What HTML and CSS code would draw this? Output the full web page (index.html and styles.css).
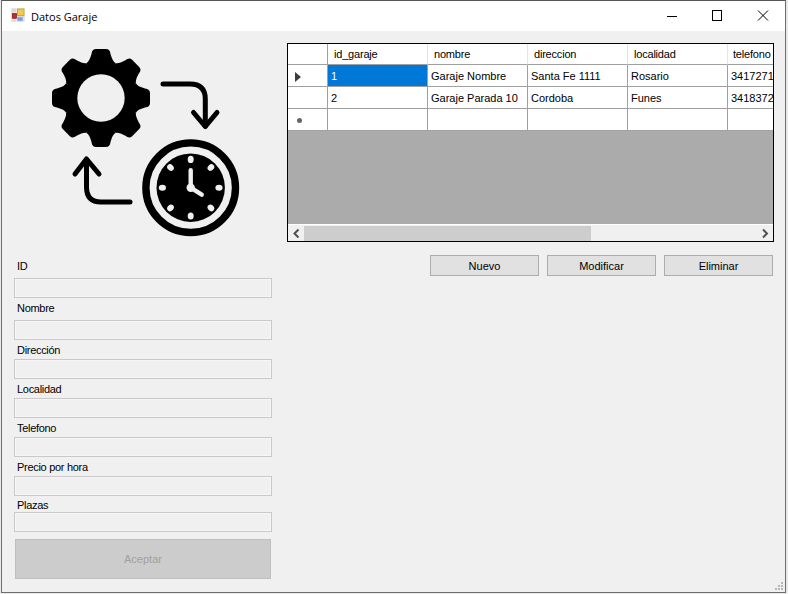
FILE: index.html
```html
<!DOCTYPE html>
<html lang="es">
<head>
<meta charset="utf-8">
<title>Datos Garaje</title>
<link rel="stylesheet" href="styles.css">
</head>
<body>
<div class="window">
  <header class="titlebar">
    <svg class="appicon" viewBox="0 0 16 16" aria-hidden="true">
      <rect x="1.300" y="0.300" width="13.400" height="13.400" fill="#d9d9d9"/>
      <path d="M6.900 0.300V13.700M1.300 4.800H14.700M1.300 11H14.700" stroke="#f7f7f7" stroke-width="0.800"/>
      <rect x="7.500" y="1" width="6.500" height="6.500" fill="#f5cc45" stroke="#c09526" stroke-width="0.700"/>
      <rect x="2.300" y="5.500" width="4.200" height="4.800" fill="#c8281f" stroke="#8a1c16" stroke-width="0.700"/>
      <rect x="7.300" y="9.300" width="5.400" height="3.400" fill="#6f9fe2"/>
    </svg>
    <span class="title">Datos Garaje</span>
    <div class="controls">
      <svg class="ctl" viewBox="0 0 46 30" aria-hidden="true"><path d="M20 15.500H30" stroke="#000" fill="none"/></svg>
      <svg class="ctl" viewBox="0 0 46 30" aria-hidden="true"><rect x="19.500" y="9.500" width="9" height="10" stroke="#000" fill="none"/></svg>
      <svg class="ctl" viewBox="0 0 46 30" aria-hidden="true"><path d="M19 9.500L29 19.500M29 9.500L19 19.500" stroke="#000" fill="none"/></svg>
    </div>
  </header>
  <main class="client">
    <section class="left">
      <svg class="logo" viewBox="50 46 192 194" aria-hidden="true">
        <defs>
          <path id="tooth" d="M-14.500 -35.100Q-11.700 -36.200 -9.500 -44Q-9 -49 -5 -49H5Q9 -49 9.500 -44Q11.700 -36.200 14.500 -35.100L0 0Z"/>
        </defs>
        <g transform="translate(101 98)">
          <use href="#tooth"/>
          <use href="#tooth" transform="rotate(45)"/>
          <use href="#tooth" transform="rotate(90)"/>
          <use href="#tooth" transform="rotate(135)"/>
          <use href="#tooth" transform="rotate(180)"/>
          <use href="#tooth" transform="rotate(225)"/>
          <use href="#tooth" transform="rotate(270)"/>
          <use href="#tooth" transform="rotate(315)"/>
          <circle r="36" fill="#000"/>
          <circle r="23.700" fill="#f0f0f0"/>
        </g>
        <g fill="none" stroke="#000" stroke-width="5" stroke-linecap="round" stroke-linejoin="round">
          <path d="M163 84H190Q205.300 84 205.300 99V126"/>
          <path d="M193.500 112.500L205.300 126.500L217 112.500"/>
          <path d="M130 202H101Q86.500 202 86.500 187V160"/>
          <path d="M75 174L86.500 159L99 174"/>
        </g>
        <g transform="translate(190.700 187.700)">
          <circle r="44.800" fill="none" stroke="#000" stroke-width="7.400"/>
          <circle r="34.200" fill="#000"/>
          <g fill="#f0f0f0">
            <ellipse cy="-28.300" rx="3" ry="3.600"/>
            <ellipse cy="28.300" rx="3" ry="3.600"/>
            <ellipse cx="28.300" rx="3.600" ry="3"/>
            <ellipse cx="-28.300" rx="3.600" ry="3"/>
            <ellipse cx="20.200" cy="-20.200" rx="3" ry="3.600" transform="rotate(45 20.200 -20.200)"/>
            <ellipse cx="-20.200" cy="-20.200" rx="3" ry="3.600" transform="rotate(-45 -20.200 -20.200)"/>
            <ellipse cx="20.200" cy="20.200" rx="3" ry="3.600" transform="rotate(-45 20.200 20.200)"/>
            <ellipse cx="-20.200" cy="20.200" rx="3" ry="3.600" transform="rotate(45 -20.200 20.200)"/>
            <circle r="4.200"/>
          </g>
          <path d="M0 -17.500V0L11 7" fill="none" stroke="#f0f0f0" stroke-width="4.400" stroke-linecap="round" stroke-linejoin="round"/>
        </g>
      </svg>
      <form class="form">
        <label class="field gap-a"><span class="lbl">ID</span><span class="input"></span></label>
        <label class="field gap-a"><span class="lbl">Nombre</span><span class="input"></span></label>
        <label class="field gap-b"><span class="lbl">Dirección</span><span class="input"></span></label>
        <label class="field gap-b"><span class="lbl">Localidad</span><span class="input"></span></label>
        <label class="field gap-b"><span class="lbl">Telefono</span><span class="input"></span></label>
        <label class="field gap-b"><span class="lbl">Precio por hora</span><span class="input"></span></label>
        <label class="field gap-c"><span class="lbl">Plazas</span><span class="input"></span></label>
        <div class="accept">Aceptar</div>
      </form>
    </section>
    <section class="right">
      <div class="grid">
        <div class="viewport">
          <div class="row head">
            <div class="rh"></div>
            <div class="cell">id_garaje</div>
            <div class="cell">nombre</div>
            <div class="cell">direccion</div>
            <div class="cell">localidad</div>
            <div class="cell">telefono</div>
          </div>
          <div class="row">
            <div class="rh"><svg class="marker" viewBox="0 0 6 10" aria-hidden="true"><path d="M0 0L6 5L0 10Z" fill="#3c3c3c"/></svg></div>
            <div class="cell selected">1</div>
            <div class="cell">Garaje Nombre</div>
            <div class="cell">Santa Fe 1111</div>
            <div class="cell">Rosario</div>
            <div class="cell">3417271</div>
          </div>
          <div class="row">
            <div class="rh"></div>
            <div class="cell">2</div>
            <div class="cell">Garaje Parada 10</div>
            <div class="cell">Cordoba</div>
            <div class="cell">Funes</div>
            <div class="cell">3418372</div>
          </div>
          <div class="row">
            <div class="rh"><span class="star"></span></div>
            <div class="cell"></div>
            <div class="cell"></div>
            <div class="cell"></div>
            <div class="cell"></div>
            <div class="cell"></div>
          </div>
        </div>
        <div class="hscroll">
          <svg class="sbtn first" viewBox="0 0 16 15" aria-hidden="true"><path d="M10.500 3.500L6.500 7.500L10.500 11.500" fill="none" stroke="#505050" stroke-width="2"/></svg>
          <div class="track"><div class="thumb"></div></div>
          <svg class="sbtn" viewBox="0 0 16 15" aria-hidden="true"><path d="M6 3.500L10 7.500L6 11.500" fill="none" stroke="#505050" stroke-width="2"/></svg>
        </div>
      </div>
      <div class="actions">
        <button class="btn" type="button">Nuevo</button>
        <button class="btn" type="button">Modificar</button>
        <button class="btn" type="button">Eliminar</button>
      </div>
    </section>
    <div class="grip" aria-hidden="true">
      <i></i><i></i><i></i><i></i><i></i><i></i><i></i><i></i><i></i>
    </div>
  </main>
</div>
</body>
</html>
```
FILE: styles.css
```css
* { box-sizing: border-box; }
html, body { margin: 0; height: 100%; background: #e9e9e9; overflow: hidden; }
body { padding: 0 1px 1px 1px; font-family: "Liberation Sans", Arial, sans-serif; font-size: 11px; color: #000; }
.window { width: 785px; height: 593px; display: flex; flex-direction: column; border: 1px solid #6e6e6e; border-top: 1px solid #555; background: #f0f0f0; }
.titlebar { height: 30px; flex: none; background: #fff; display: flex; align-items: center; padding-left: 8px; }
.appicon { width: 16px; height: 16px; flex: none; }
.title { margin-left: 5px; font-family: "Open Sans", sans-serif; font-size: 11px; color: #000; }
.controls { margin-left: auto; display: flex; }
.ctl { width: 46px; height: 30px; display: block; }
.client { flex: 1; position: relative; display: flex; padding-left: 12px; }
.left { width: 258px; flex: none; display: flex; flex-direction: column; }
.logo { width: 192px; height: 194px; margin: 15px 0 0 36px; display: block; flex: none; }
.form { margin-top: 19px; display: flex; flex-direction: column; }
.field { display: flex; flex-direction: column; margin-bottom: 3px; }
.lbl { height: 14px; line-height: 15px; padding-left: 3px; letter-spacing: -0.3px; }
.gap-a .lbl { margin-bottom: 5px; }
.gap-b .lbl { margin-bottom: 2px; }
.gap-c .lbl { margin-bottom: 0; }
.gap-c { margin-top: -1px; }
.input { height: 20px; display: block; background: #f0f0f0; border: 1px solid #c9c9c9; box-shadow: inset 0 0 0 1px #f6f6f6; }
.accept { margin: 4px 1px 0; height: 40px; background: #cccccc; border: 1px solid #bfbfbf; color: #a0a0a0; display: flex; align-items: center; justify-content: center; }
.right { width: 487px; margin-left: 15px; padding-top: 12px; display: flex; flex-direction: column; flex: none; }
.grid { height: 199px; border: 1px solid #000; background: #ababab; display: flex; flex-direction: column; overflow: hidden; }
.viewport { flex: 1; overflow: hidden; }
.row { display: flex; height: 22px; }
.row.head { height: 21px; }
.rh { width: 40px; flex: none; background: #fff; border-right: 1px solid #a0a0a0; border-bottom: 1px solid #a0a0a0; display: flex; align-items: center; justify-content: center; }
.cell { width: 100px; flex: none; background: #fff; border-right: 1px solid #a0a0a0; border-bottom: 1px solid #a0a0a0; padding: 0 3px; line-height: 23px; white-space: nowrap; overflow: hidden; }
.head .cell { padding-left: 6px; line-height: 21px; border-right-color: #e4e4e4; letter-spacing: -0.2px; }
.head .cell:last-child { padding-left: 5px; }
.selected { background: #0078d7; color: #fff; }
.marker { width: 6px; height: 10px; display: block; margin: 2px 20px 0 0; }
.star { width: 5px; height: 5px; margin: 2px 17px 0 0; border-radius: 50%; background: #666; display: block; }
.hscroll { height: 17px; flex: none; display: flex; background: #f0f0f0; padding: 1px 0 0; border-top: 1px solid #fff; }
.sbtn { width: 16px; height: 15px; display: block; flex: none; }
.track { flex: 1; }
.thumb { width: 287px; height: 15px; background: #cdcdcd; }
.actions { display: flex; gap: 8px; justify-content: flex-end; margin-top: 13px; padding-right: 1px; }
.btn { width: 109px; height: 21px; padding: 0; background: #e1e1e1; border: 1px solid #adadad; border-radius: 0; font: inherit; color: #000; }
.grip { position: absolute; right: 1px; bottom: 1px; width: 9px; height: 9px; display: grid; grid-template-columns: repeat(3, 3px); grid-template-rows: repeat(3, 3px); }
.grip i { display: block; width: 2px; height: 2px; background: #b8b8b8; }
.grip i:nth-child(1), .grip i:nth-child(2), .grip i:nth-child(4) { background: transparent; }
```
